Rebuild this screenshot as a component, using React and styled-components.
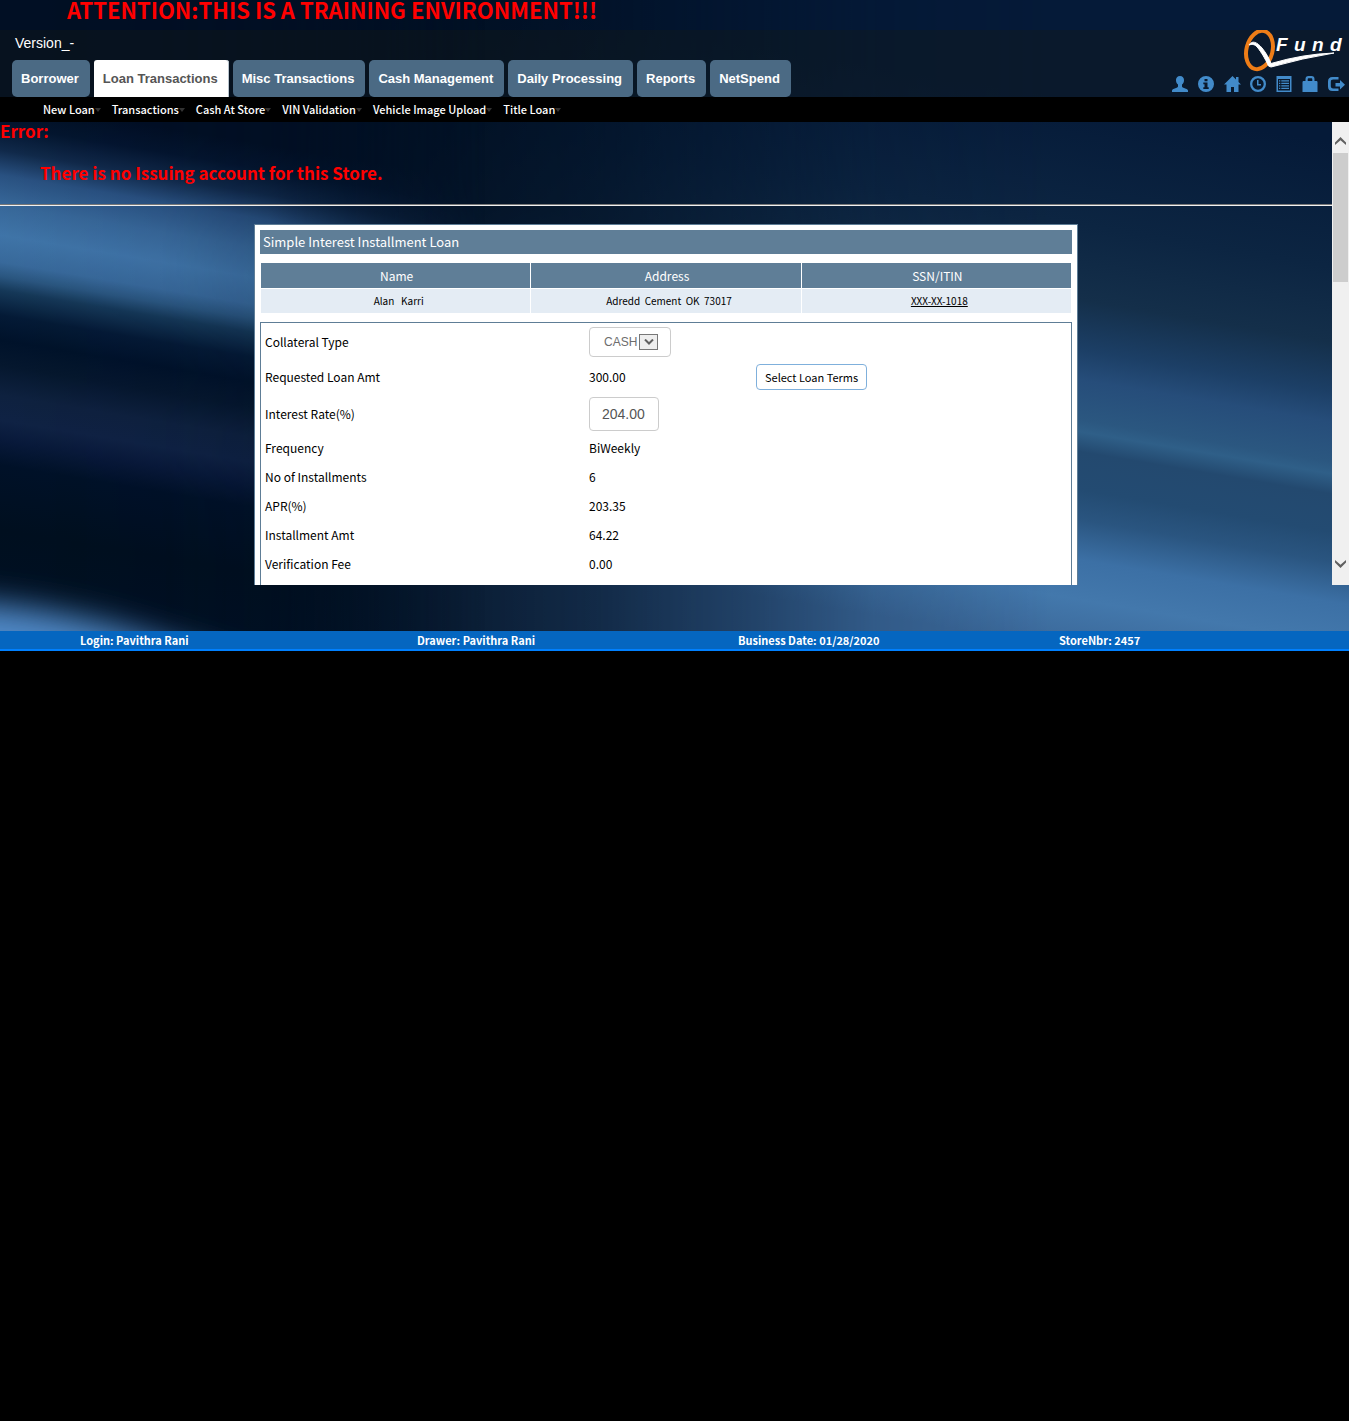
import React from "react";
import styled, { createGlobalStyle, css } from "styled-components";

const humanist = '"Noto Sans CJK SC", "Source Sans Pro", sans-serif';
const grotesk = '"Liberation Sans", Arial, sans-serif';

const GlobalStyle = createGlobalStyle`
  *, *::before, *::after { box-sizing: border-box; }
  body {
    margin: 0;
    background: #000;
    color: #000;
    font-family: ${humanist};
    font-size: 12px;
    line-height: 20px;
  }
`;

const Shell = styled.div`
  position: relative;
  isolation: isolate;
  display: flex;
  flex-direction: column;
`;

const Backdrop = styled.svg`
  position: absolute;
  z-index: -1;
  top: 0;
  left: 0;
  width: 100%;
  height: 100%;
`;

const Notice = styled.div`
  height: 30px;
  padding-left: 67px;
  color: #f00;
  font-size: 22px;
  font-weight: 700;
  line-height: 18px;
  white-space: nowrap;
`;

const Header = styled.header`
  display: flex;
  justify-content: space-between;
  height: 67px;
  background: rgba(20, 26, 24, 0.35);
`;

const HeaderStart = styled.div`
  display: flex;
  flex-direction: column;
  justify-content: space-between;
  padding-left: 12px;
`;

const HeaderEnd = styled.div`
  display: flex;
  flex-direction: column;
  align-items: flex-end;
  gap: 4px;
`;

const Version = styled.span`
  padding: 3px;
  color: #fff;
  font-family: ${grotesk};
  font-size: 14px;
`;

const Tabs = styled.nav`
  display: flex;
  gap: 4px;
`;

const Tab = styled.a`
  height: 37px;
  padding: 0 11px 0 9px;
  border-radius: ${(p) => (p.$active ? "3px 3px 0 0" : "5px")};
  background: ${(p) => (p.$active ? "#fff" : "#4b6a84")};
  color: ${(p) => (p.$active ? "#555" : "#fff")};
  font-family: ${grotesk};
  font-size: 13px;
  font-weight: 700;
  line-height: 37px;
  text-decoration: none;
  white-space: nowrap;
  ${(p) => p.$active && css`box-shadow: inset -1px 0 0 #b8c4ce;`}
`;

const Logo = styled.svg`
  display: block;
  width: 106px;
  height: 42px;
`;

const IconBar = styled.div`
  display: flex;
  gap: 10px;
  padding-right: 5px;
`;

const IconButton = styled.button`
  display: block;
  width: 16px;
  height: 16px;
  padding: 0;
  border: 0;
  background: none;
  color: #428bca;
  svg { display: block; width: 16px; height: 16px; overflow: visible; }
`;

const SubMenu = styled.nav`
  display: flex;
  gap: 11px;
  height: 25px;
  padding-left: 43px;
  background: #000;
`;

const SubLink = styled.a`
  display: flex;
  align-items: center;
  color: #fff;
  font-size: 11px;
  font-weight: 500;
  line-height: 25px;
  text-decoration: none;
  white-space: nowrap;
  &::after {
    content: "";
    border: 3px solid transparent;
    border-top: 4px solid #333;
    border-bottom: 0;
  }
`;

const Viewport = styled.div`
  display: flex;
  height: 463px;
`;

const Content = styled.main`
  flex: 1;
  min-width: 0;
  overflow: hidden;
`;

const Alert = styled.div`
  height: 82px;
  color: #f00;
  font-size: 17px;
  font-weight: 700;
  line-height: 18px;
  p { margin: 24px 0 0 40px; }
`;

const Divider = styled.hr`
  height: 2px;
  margin: 0 0 18px;
  border: 0;
  border-top: 1px solid #777;
  background: #f0f0f0;
`;

const Card = styled.section`
  width: 824px;
  max-width: 100%;
  margin: 0 auto;
  padding: 5px 5px 0;
  border: 1px solid #5e7d96;
  border-bottom: 0;
  background: #fff;
`;

const CardTitle = styled.h1`
  margin: 0 0 8px;
  padding: 0 3px;
  background: #5f7e97;
  color: #fff;
  font-size: 13px;
  font-weight: 400;
  line-height: 24px;
`;

const People = styled.table`
  width: 100%;
  table-layout: fixed;
  border-collapse: separate;
  border-spacing: 1px;
  text-align: center;
  line-height: 24px;
  th, td { height: 25px; padding: 0 0 0 2px; }
  th { background: #5f7e97; color: #fff; font-size: 12px; font-weight: 400; }
  td { height: 24px; padding-left: 6px; background: #e4ecf4; font-size: 10px; white-space: pre; }
  a { color: #000; }
`;

const Fields = styled.div`
  margin-top: 8px;
  padding: 2px 4px 12px;
  border: 1px solid #5e7d96;
  border-bottom: 0;
`;

const Field = styled.div`
  display: grid;
  grid-template-columns: 324px 167px 1fr;
  align-items: center;
  min-height: ${(p) => p.$height || 29}px;
`;

const boxed = css`
  border: 1px solid #ccc;
  border-radius: 4px;
  background: #fff;
  color: #555;
  font-family: ${grotesk};
`;

const SelectWrap = styled.span`
  position: relative;
  display: block;
  width: 82px;
  height: 30px;
`;

const Select = styled.select`
  ${boxed}
  appearance: none;
  width: 100%;
  height: 100%;
  padding: 0 14px;
  color: #6d6d6d;
  font-size: 12px;
`;

const SelectArrow = styled.span`
  position: absolute;
  top: 7px;
  right: 13px;
  display: grid;
  place-items: center;
  width: 19px;
  height: 16px;
  border: 1px solid #777;
  background: #eee;
  pointer-events: none;
`;

const Input = styled.input`
  ${boxed}
  width: 70px;
  height: 34px;
  padding: 0 12px;
  font-size: 14px;
`;

const Button = styled.button`
  justify-self: start;
  height: 26px;
  padding: 0 8px;
  border: 1px solid #7fb0dc;
  border-radius: 4px;
  background: #fff;
  color: #000;
  font-family: ${humanist};
  font-size: 11px;
  line-height: 20px;
`;

const ScrollTrack = styled.div`
  display: flex;
  flex-direction: column;
  align-items: center;
  width: 17px;
  background: #f0f0f0;
`;

const ScrollButton = styled.button`
  display: grid;
  place-items: center;
  width: 17px;
  height: 31px;
  padding: ${(p) => (p.$down ? "0 0 12px" : "6px 0 0")};
  border: 0;
  background: none;
`;

const ScrollThumb = styled.div`
  width: 15px;
  height: 129px;
  margin-bottom: auto;
  background: #cdcdcd;
`;

const Status = styled.footer`
  display: grid;
  grid-template-columns: 337px 321px 321px 1fr;
  height: 20px;
  margin-top: 46px;
  padding-left: 80px;
  border-bottom: 2px solid #0080ff;
  background: #0566c0;
  color: #fff;
  font-size: 11px;
  font-weight: 700;
  line-height: 18px;
`;

const Chevron = ({ up }) => (
  <svg width="11" height="8" viewBox="0 0 11 8" aria-hidden="true">
    <path d={up ? "M0 5.500L5.500 0L11 5.500V8L5.500 3.200L0 8Z" : "M0 2.500L5.500 8L11 2.500V0L5.500 4.800L0 0Z"} fill="#606060" />
  </svg>
);

const SelectChevron = () => (
  <svg width="10" height="6" viewBox="0 0 10 6" aria-hidden="true">
    <path d="M1 .5L5 4.500L9 .5" fill="none" stroke="#606060" strokeWidth="2" />
  </svg>
);

const icons = [
  ["User", <path d="M8 0c2.600 0 4 1.700 4 4 0 2-.7 3.600-2 4.600v1.700c0 .7.4 1.100 1.400 1.500 2.600.9 4.600 1.700 4.600 2.700V16H0v-1.500c0-1 2-1.800 4.600-2.700 1-.4 1.400-.8 1.400-1.500V8.600C4.700 7.600 4 6 4 4 4 1.700 5.400 0 8 0z" />],
  ["Information", <path fillRule="evenodd" d="M8 0a8 8 0 1 0 0 16A8 8 0 0 0 8 0zM6.500 3h3v2.300h-3zM5.300 6.500h4.200v4.700h1.200V13H5.300v-1.800h1.200V8.300H5.300z" />],
  ["Home", <path d="M8.500 0L17 8.500h-2.500V16H10v-5H7v5H2.500V8.500H0zM12 1h2.500v5L12 4z" />],
  ["Clock", <path fillRule="evenodd" d="M8 0a8 8 0 1 0 0 16A8 8 0 0 0 8 0zm0 2.300a5.700 5.700 0 1 1 0 11.400A5.700 5.700 0 0 1 8 2.300zM7 4h1.500v4H11v1.500H7z" />],
  ["List", <path fillRule="evenodd" d="M.5 0h15v16H.5zM2 3v11.500h12V3zm1 1.200h1.300v1.300H3zm2.300 0H13v1.300H5.300zM3 6.700h1.300V8H3zm2.300 0H13V8H5.300zM3 9.200h1.300v1.300H3zm2.300 0H13v1.300H5.300zM3 11.700h1.300V13H3zm2.300 0H13V13H5.300z" />],
  ["Lock", <path fillRule="evenodd" d="M3.500 5V3c0-2 1-3 3-3h3c2 0 3 1 3 3v2H14c1 0 1.500.5 1.500 1.300V16H.5V6.300C.5 5.500 1 5 2 5zm2.200 0h4.600V3.500c0-.9-.3-1.200-1.200-1.200H6.900c-.9 0-1.200.3-1.200 1.200z" />],
  ["Log out", <path d="M10.500 1v2.500H5.200c-1.700 0-2.400.8-2.400 2.400v4.200c0 1.700.7 2.400 2.400 2.400h5.300V15H4.500C1.500 15 0 13.500 0 10.500v-5C0 2.500 1.500 1 4.500 1zM12 4L17 8.800l-5 4.700v-3H7.500v-3.500H12z" />],
];

const tabs = ["Borrower", "Loan Transactions", "Misc Transactions", "Cash Management", "Daily Processing", "Reports", "NetSpend"];
const links = ["New Loan", "Transactions", "Cash At Store", "VIN Validation", "Vehicle Image Upload", "Title Loan"];
const details = [
  ["Frequency", "BiWeekly"],
  ["No of Installments", "6"],
  ["APR(%)", "203.35"],
  ["Installment Amt", "64.22"],
  ["Verification Fee", "0.00"],
];

const eastStops = [
  [100, "#051a38"], [225, "#0c2542"], [300, "#142f4a"], [350, "#1c3f66"], [380, "#264d7a"], [420, "#2b5780"],
  [432, "#2f5f88"], [452, "#23496f"], [490, "#234b72"], [520, "#2a5580"], [560, "#3c70a5"], [600, "#4378ac"], [650, "#3b6899"],
];
const westStops = [
  [100, "#010f24"], [125, "#03152f"], [150, "#10294a"], [175, "#295181"], [205, "#376799"], [235, "#3f74a8"], [262, "#38699b"],
  [276, "#2a5680"], [290, "#153858"], [315, "#041a36"], [340, "#00122a"], [365, "#05172e"], [395, "#0e213f"], [420, "#0f2244"],
  [440, "#08193a"], [465, "#001128"], [530, "#000f1f"], [700, "#001128"],
];
const Stops = ({ list, from, to }) =>
  list.map(([y, color]) => <stop key={y} offset={(y - from) / (to - from)} stopColor={color} />);

const Waves = () => (
  <Backdrop viewBox="0 0 1349 651" preserveAspectRatio="none" aria-hidden="true">
    <defs>
      <linearGradient id="night" x1="0" y1="0" x2="1" y2="0">
        <stop offset="0" stopColor="#001026" />
        <stop offset=".35" stopColor="#000e20" />
        <stop offset=".7" stopColor="#00142e" />
        <stop offset="1" stopColor="#02193a" />
      </linearGradient>
      <linearGradient id="east" gradientUnits="userSpaceOnUse" x1="0" y1="0" x2="0" y2="700">
        <Stops list={eastStops} from={0} to={700} />
      </linearGradient>
      <linearGradient id="west" gradientUnits="userSpaceOnUse" x1="0" y1="0" x2="0" y2="700">
        <Stops list={westStops} from={0} to={700} />
      </linearGradient>
      <linearGradient id="eastFade" x1="0" y1="0" x2="1" y2="0">
        <stop offset=".2" stopColor="#fff" stopOpacity="0" />
        <stop offset=".44" stopColor="#fff" stopOpacity=".3" />
        <stop offset=".55" stopColor="#fff" stopOpacity=".55" />
        <stop offset=".65" stopColor="#fff" stopOpacity=".85" />
        <stop offset=".78" stopColor="#fff" />
      </linearGradient>
      <linearGradient id="westFade" x1="0" y1="0" x2="1" y2="0">
        <stop offset="0" stopColor="#fff" />
        <stop offset=".12" stopColor="#fff" stopOpacity=".96" />
        <stop offset=".2" stopColor="#fff" stopOpacity=".84" />
        <stop offset=".36" stopColor="#fff" stopOpacity="0" />
      </linearGradient>
      <mask id="eastMask"><rect width="1349" height="651" fill="url(#eastFade)" /></mask>
      <mask id="westMask"><rect width="1349" height="651" fill="url(#westFade)" /></mask>
      <filter id="soft" x="-20%" y="-80%" width="140%" height="260%"><feGaussianBlur stdDeviation="16" /></filter>
    </defs>
    <rect width="1349" height="651" fill="url(#night)" />
    <g mask="url(#eastMask)">
      <rect x="-50" y="-200" width="1500" height="1200" fill="url(#east)" transform="translate(0 -181) skewY(9.500)" />
    </g>
    <g mask="url(#westMask)">
      <rect x="-50" y="-200" width="900" height="1000" fill="url(#west)" transform="skewY(9.500)" />
    </g>
    <path d="M-80 600Q40 600 160 640L320 690L-80 700Z" fill="#4f88c6" filter="url(#soft)" />
  </Backdrop>
);

const QFundLogo = () => (
  <Logo viewBox="0 0 106 42" role="img" aria-label="QFund">
    <ellipse cx="16.500" cy="20" rx="13" ry="19.500" transform="rotate(14 16.500 20)" fill="none" stroke="#ee7d17" strokeWidth="4" />
    <path d="M6 15C9 10 14 12 19 18C23 23 26 28 28 33.500Q60 24 91 23Q60 28 28 37L25.500 36C22 28 18 22 15 18C12 14 9 14 6 15Z" fill="#fff" stroke="#fff" strokeWidth="1" />
    <g fill="#fff" fontFamily={grotesk} fontSize="19" fontStyle="italic" fontWeight="700">
      <text x="33" y="21">F</text>
      <text x="51" y="21">u</text>
      <text x="69" y="21">n</text>
      <text x="87" y="21">d</text>
    </g>
  </Logo>
);

export default function App() {
  return (
    <>
      <GlobalStyle />
      <Shell>
        <Waves />
        <Notice>ATTENTION:THIS IS A TRAINING ENVIRONMENT!!!</Notice>
        <Header>
          <HeaderStart>
            <Version>Version_-</Version>
            <Tabs>
              {tabs.map((t) => (
                <Tab key={t} href="#" $active={t === "Loan Transactions"}>{t}</Tab>
              ))}
            </Tabs>
          </HeaderStart>
          <HeaderEnd>
            <QFundLogo />
            <IconBar>
              {icons.map(([name, shape]) => (
                <IconButton key={name} type="button" aria-label={name}>
                  <svg viewBox="0 0 16 16" fill="currentColor" aria-hidden="true">{shape}</svg>
                </IconButton>
              ))}
            </IconBar>
          </HeaderEnd>
        </Header>
        <SubMenu>
          {links.map((l) => <SubLink key={l} href="#">{l}</SubLink>)}
        </SubMenu>
        <Viewport>
          <Content>
            <Alert role="alert">
              Error:
              <p>There is no Issuing account for this Store.</p>
            </Alert>
            <Divider />
            <Card>
              <CardTitle>Simple Interest Installment Loan</CardTitle>
              <People>
                <thead>
                  <tr><th>Name</th><th>Address</th><th>SSN/ITIN</th></tr>
                </thead>
                <tbody>
                  <tr>
                    <td>{"Alan   Karri"}</td>
                    <td>{"Adredd  Cement  OK  73017"}</td>
                    <td><a href="#">XXX-XX-1018</a></td>
                  </tr>
                </tbody>
              </People>
              <Fields>
                <Field $height={34}>
                  <label htmlFor="collateral">Collateral Type</label>
                  <SelectWrap>
                    <Select id="collateral" defaultValue="CASH"><option>CASH</option></Select>
                    <SelectArrow><SelectChevron /></SelectArrow>
                  </SelectWrap>
                </Field>
                <Field $height={36}>
                  <span>Requested Loan Amt</span>
                  <span>300.00</span>
                  <Button type="button">Select Loan Terms</Button>
                </Field>
                <Field $height={38}>
                  <label htmlFor="rate">Interest Rate(%)</label>
                  <Input id="rate" defaultValue="204.00" />
                </Field>
                {details.map(([k, v]) => (
                  <Field key={k}><span>{k}</span><span>{v}</span></Field>
                ))}
              </Fields>
            </Card>
          </Content>
          <ScrollTrack>
            <ScrollButton type="button" aria-label="Scroll up"><Chevron up /></ScrollButton>
            <ScrollThumb />
            <ScrollButton type="button" aria-label="Scroll down" $down><Chevron /></ScrollButton>
          </ScrollTrack>
        </Viewport>
        <Status>
          <span>Login: Pavithra Rani</span>
          <span>Drawer: Pavithra Rani</span>
          <span>Business Date: 01/28/2020</span>
          <span>StoreNbr: 2457</span>
        </Status>
      </Shell>
    </>
  );
}
